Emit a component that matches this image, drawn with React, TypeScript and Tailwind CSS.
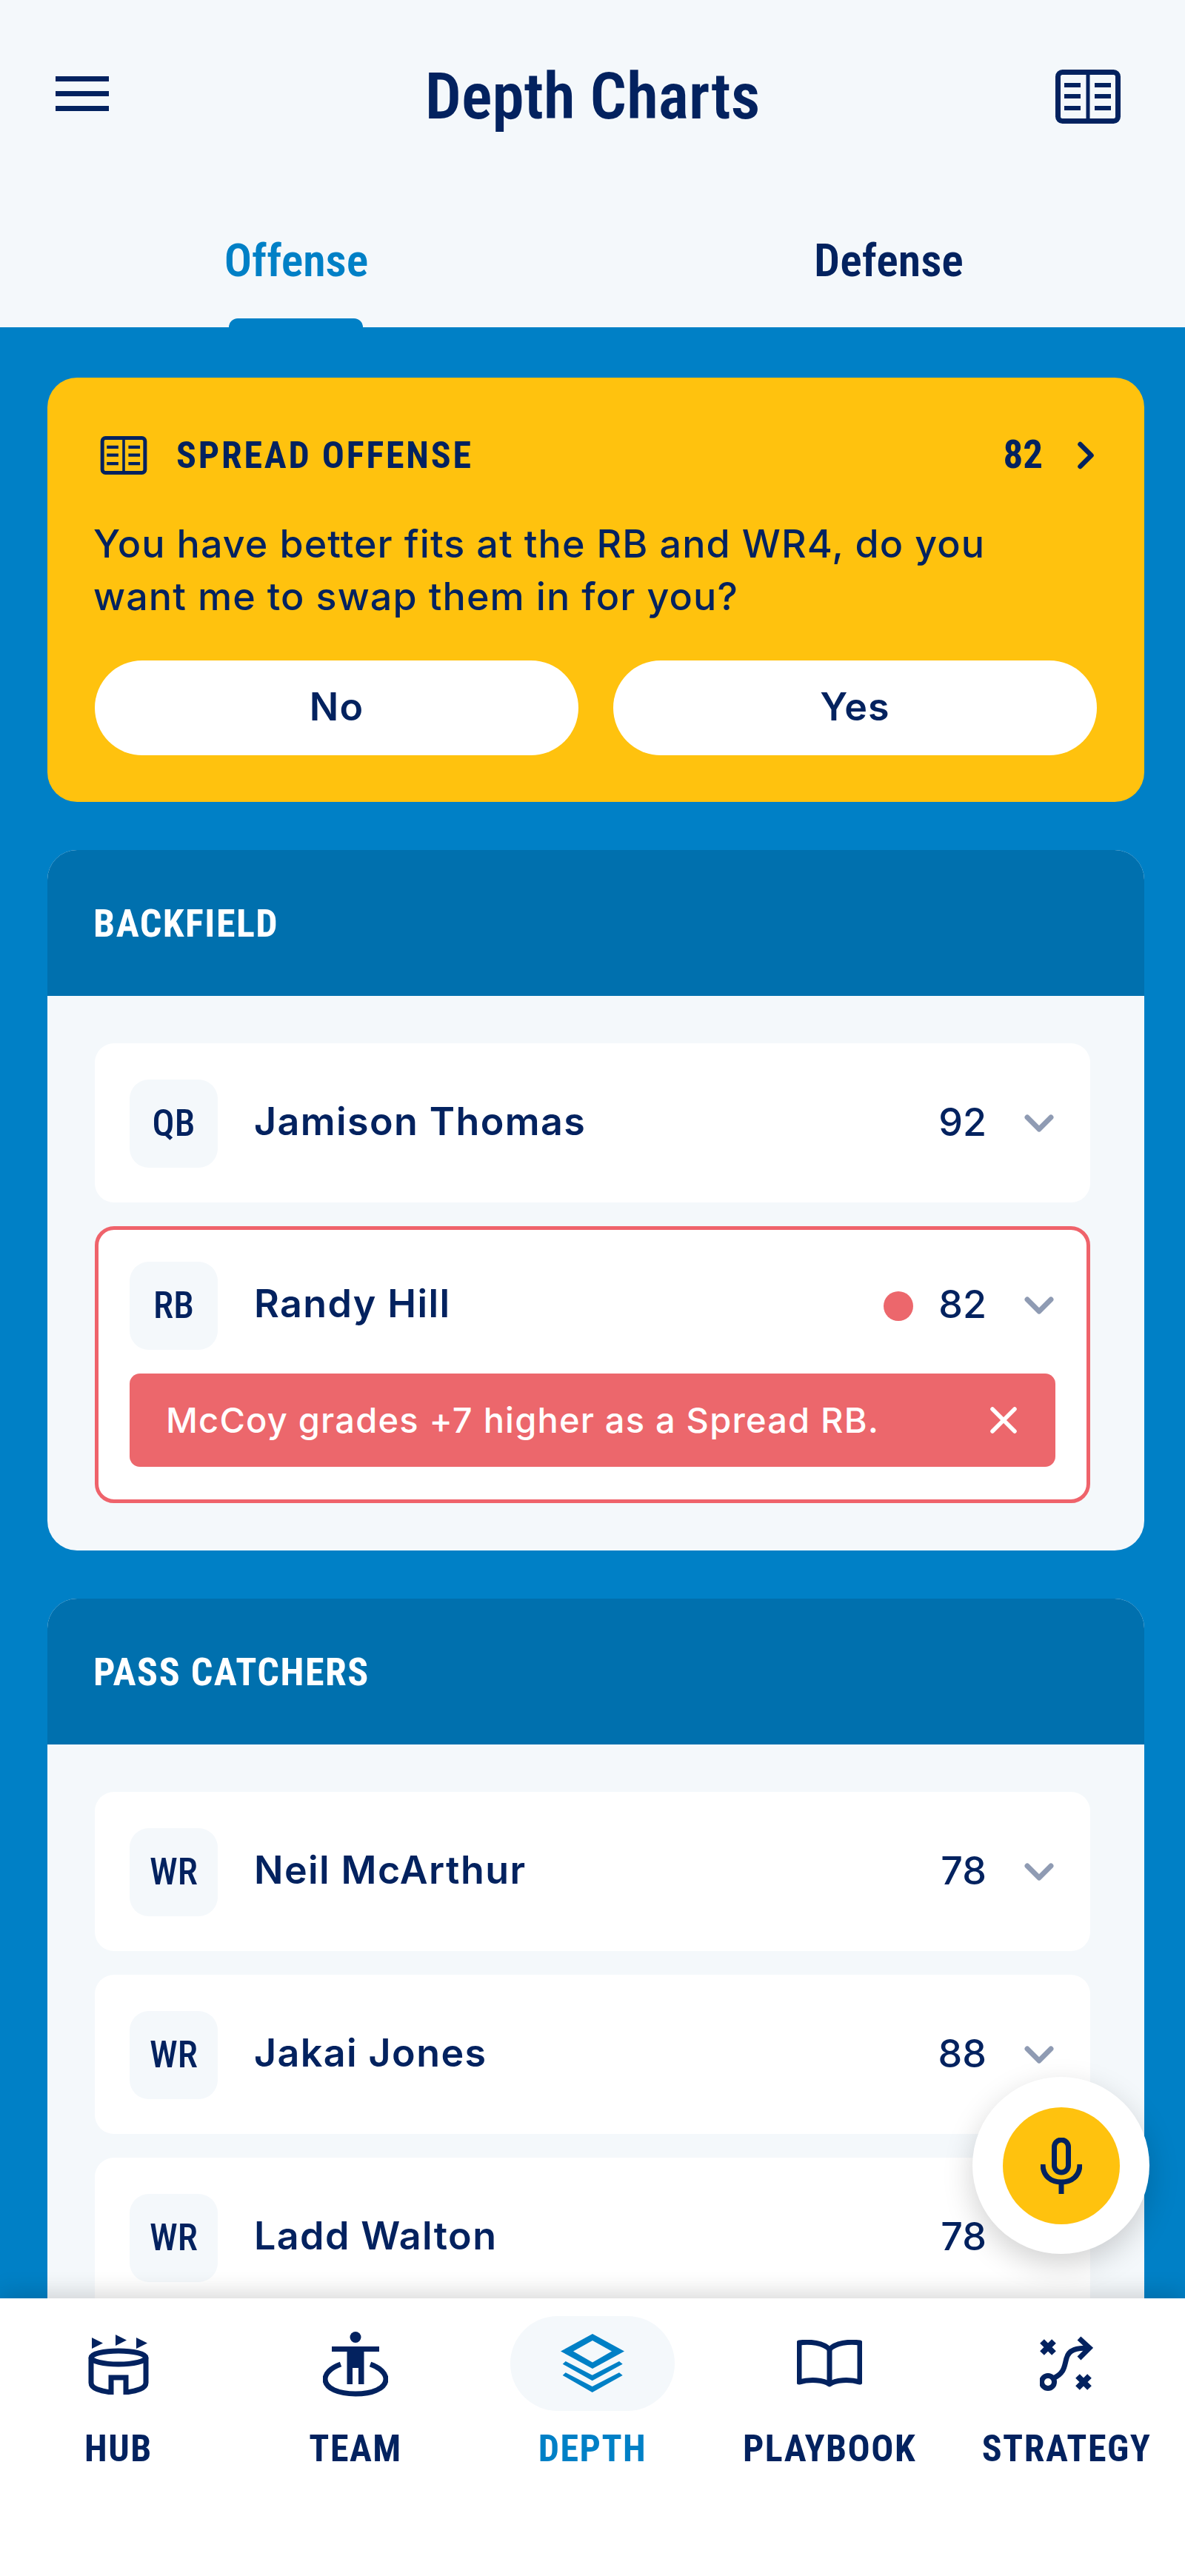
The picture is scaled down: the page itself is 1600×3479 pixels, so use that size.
import { ChevronDown, ChevronRight, X } from "lucide-react";

const condensed = "font-['Roboto',sans-serif] [font-stretch:75%]";
const body = "font-['Inter','Noto_Sans',sans-serif]";

const BookIcon = ({ className }: { className: string }) => (
    <svg viewBox="0 0 88 73" fill="none" stroke="currentColor" strokeWidth="7" className={className}>
        <rect x="3.5" y="3.5" width="81" height="66" rx="6" />
        <path d="M44 4V69" strokeWidth="5" />
        <path d="M12 21H34M12 36H34M12 52H34M53 21H75M53 36H75M53 52H75" strokeWidth="6" />
    </svg>
);

const HubIcon = () => (
    <svg viewBox="0 0 84 84" className="w-[84px] h-[84px]" fill="none" stroke="currentColor" strokeWidth="7">
        <path d="M6 7L21 14.5L6 22Z M38 3L53 10.5L38 18Z M66 7L81 14.5L66 22Z" fill="currentColor" stroke="none" />
        <ellipse cx="42" cy="34" rx="37" ry="9" />
        <path d="M5 34V68C5 76 18 79 32 81V61H52V81C66 79 79 76 79 68V34" />
    </svg>
);

const TeamIcon = () => (
    <svg viewBox="0 0 88 92" className="w-[88px] h-[92px]" fill="none">
        <ellipse cx="44" cy="10.5" rx="7.5" ry="7.5" fill="currentColor" />
        <path d="M12 23H76V30H55.5V74H48V52H40V74H32.5V30H12Z" fill="currentColor" />
        <path d="M24 47C10 52 3 60 3 67C3 80 22 87 44 87C66 87 85 80 85 67C85 60 78 52 64 47" stroke="currentColor" strokeWidth="7" />
    </svg>
);

const LayersIcon = () => (
    <svg viewBox="0 0 86 80" className="w-[86px] h-[80px]" fill="currentColor">
        <path fillRule="evenodd" d="M43 0L86 23.5L43 47L0 23.5ZM43 9L17 23.5L43 38.5L69 23.5Z" />
        <path d="M6.7 37L42.7 55.7L79 37L83.7 40.7L42.7 63.3L2.7 40.7Z" />
        <path d="M6.7 52.3L42.7 71L79 52.3L83.7 56L42.7 79L2.7 56Z" />
    </svg>
);

const PlaybookIcon = () => (
    <svg viewBox="0 0 88 64" className="w-[88px] h-[64px]" fill="none" stroke="currentColor" strokeWidth="7">
        <path d="M44 13C36 4 18 2 3 4V57C18 53 36 54 44 60C52 54 70 53 85 57V4C70 2 52 4 44 13Z" strokeLinejoin="round" />
        <path d="M44 13V58" />
    </svg>
);

const StrategyIcon = () => (
    <svg viewBox="0 0 72 74" className="w-[72px] h-[74px]" fill="none" stroke="currentColor" strokeWidth="7">
        <path d="M3 7L19 23M19 7L3 23" strokeWidth="8" />
        <circle cx="11" cy="62" r="8.5" />
        <path d="M18 57C34 50 33 40 36 30C39 18 50 16 66 16" />
        <path d="M53 3L67 16L53 30" />
        <path d="M51 54L67 70M67 54L51 70" strokeWidth="8" />
    </svg>
);

const MicIcon = () => (
    <svg viewBox="0 0 56 76" className="w-[56px] h-[76px]" fill="none" stroke="currentColor" strokeWidth="7">
        <rect x="18.5" y="3" width="19" height="44" rx="9.5" />
        <path d="M3 36C3 52 14 60 28 60C42 60 53 52 53 36" />
        <path d="M28 60V76" />
    </svg>
);

type Player = { pos: string; name: string; score: number; alert?: string };

const PlayerRow = ({ pos, name, score, alert }: Player) => (
    <div className={`bg-white rounded-[26px] box-border ${alert ? "border-[5px] border-[#ef636b] h-[374px] px-[42px] pt-[43px]" : "h-[215px] px-[47px] pt-[49px]"}`}>
        <div className="flex items-center h-[119px]">
            <div className={`w-[119px] h-[119px] rounded-[26px] bg-[#f4f8fb] flex items-center justify-center text-[50px] font-medium ${condensed}`}>{pos}</div>
            <div className="ml-[49px] flex-1 text-[52px] font-semibold leading-none tracking-[1.4px] -mt-[5px]">{name}</div>
            {alert && <div className="w-[40px] h-[40px] rounded-full bg-[#ec676c] mr-[34px]"></div>}
            <div className="text-[52px] font-medium leading-none -mt-[4px]">{score}</div>
            <ChevronDown className="w-[64px] h-[64px] text-[#8f9bb3] ml-[39px] -mr-[10px] -mt-[2px]" strokeWidth={2.6} />
        </div>
        {alert && (
            <div className="mt-[32px] h-[126px] rounded-[14px] bg-[#ec676c] flex items-center justify-between pl-[49px] pr-[40px] text-white text-[47px] tracking-[1.2px] font-medium">
                <span>{alert}</span>
                <X className="w-[60px] h-[60px]" strokeWidth={2.2} />
            </div>
        )}
    </div>
);

const Section = ({ title, players }: { title: string; players: Player[] }) => (
    <section className="shrink-0 rounded-[40px] overflow-hidden bg-[#f4f8fb]">
        <div className={`h-[197px] bg-[#0070ae] text-white flex items-center pl-[62px] pt-[3px] text-[52px] font-bold tracking-[1.5px] ${condensed}`}>{title}</div>
        <div className="pl-[64px] pr-[73px] py-[64px] flex flex-col gap-[32px]">
            {players.map((p) => <PlayerRow key={p.name} {...p} />)}
        </div>
    </section>
);

const tabs = [
    { label: "HUB", Icon: HubIcon },
    { label: "TEAM", Icon: TeamIcon },
    { label: "DEPTH", Icon: LayersIcon, active: true },
    { label: "PLAYBOOK", Icon: PlaybookIcon },
    { label: "STRATEGY", Icon: StrategyIcon },
];

const App = () => {
    return (
        <div className={`relative w-[1600px] h-[3479px] overflow-hidden flex flex-col bg-[#0080c6] text-[#03225f] ${body}`}>
            <header className="h-[442px] shrink-0 bg-[#f4f8fb]">
                <div className="h-[260px] grid grid-cols-[1fr_auto_1fr] items-center px-[87px]">
                    <div className="flex flex-col gap-[13px] w-[72px] -ml-[12px] -mt-[8px]">
                        <div className="h-[7px] bg-[#03225f]"></div>
                        <div className="h-[7px] bg-[#03225f]"></div>
                        <div className="h-[7px] bg-[#03225f]"></div>
                    </div>
                    <h1 className={`text-[87px] font-semibold leading-none ${condensed}`}>Depth Charts</h1>
                    <BookIcon className="w-[88px] h-[73px] justify-self-end" />
                </div>
                <div className={`flex h-[182px] text-[62px] font-semibold ${condensed}`}>
                    <div className="relative flex-1 text-center text-[#0080c6] leading-[184px]">
                        Offense
                        <div className="absolute left-[309px] top-[170px] w-[181px] h-[12px] bg-[#0080c6] rounded-t-[12px]"></div>
                    </div>
                    <div className="flex-1 text-center leading-[184px]">Defense</div>
                </div>
            </header>

            <main className="flex-1 min-h-0 overflow-hidden pl-[64px] pr-[55px] pt-[68px] flex flex-col gap-[65px]">
                <section className="shrink-0 bg-[#ffc20e] rounded-[40px] h-[573px] pl-[62px] pr-[64px] pt-[80px]">
                    <div className="flex items-center h-[50px]">
                        <BookIcon className="w-[66px] h-[52px] ml-[8px]" />
                        <span className={`ml-[38px] flex-1 text-[50px] font-bold tracking-[2.8px] ${condensed}`}>SPREAD OFFENSE</span>
                        <span className={`text-[53px] font-bold -ml-[4px] mr-[4px] ${condensed}`}>82</span>
                        <ChevronRight className="w-[60px] h-[60px] ml-[24px] -mr-[15px]" strokeWidth={2.6} />
                    </div>
                    <p className="mt-[59px] text-[52px] leading-[71px] tracking-[1.1px] font-medium">You have better fits at the RB and WR4, do you<br />want me to swap them in for you?</p>
                    <div className="mt-[51px] flex gap-[47px] pl-[2px]">
                        <button className="flex-1 h-[128px] pb-[3px] rounded-full bg-white text-[52px] tracking-[1.1px] font-semibold">No</button>
                        <button className="flex-1 h-[128px] pb-[3px] rounded-full bg-white text-[52px] tracking-[1.1px] font-semibold">Yes</button>
                    </div>
                </section>

                <Section title="BACKFIELD" players={[
                    { pos: "QB", name: "Jamison Thomas", score: 92 },
                    { pos: "RB", name: "Randy Hill", score: 82, alert: "McCoy grades +7 higher as a Spread RB." },
                ]} />
                <Section title="PASS CATCHERS" players={[
                    { pos: "WR", name: "Neil McArthur", score: 78 },
                    { pos: "WR", name: "Jakai Jones", score: 88 },
                    { pos: "WR", name: "Ladd Walton", score: 78 },
                ]} />
            </main>

            <nav className="relative h-[375px] shrink-0 bg-white shadow-[0_-6px_30px_rgba(0,0,0,0.16)] grid grid-cols-5">
                {tabs.map(({ label, Icon, active }) => (
                    <div key={label} className={`relative flex flex-col items-center ${active ? "text-[#0080c6]" : "text-[#03225f]"}`}>
                        {active && <div className="absolute top-[24px] w-[222px] h-[128px] rounded-[64px] bg-[#f4f8fb]"></div>}
                        <div className="relative h-[128px] mt-[24px] flex items-center justify-center"><Icon /></div>
                        <span className={`mt-[26px] text-[50px] font-bold tracking-[1.5px] leading-none ${condensed}`}>{label}</span>
                    </div>
                ))}
            </nav>

            <div className="absolute left-[1313px] top-[2805px] w-[239px] h-[239px] rounded-full bg-white shadow-[0_14px_40px_rgba(0,0,0,0.18)] flex items-center justify-center">
                <div className="w-[158px] h-[158px] rounded-full bg-[#ffc20e] flex items-center justify-center"><MicIcon /></div>
            </div>
        </div>
    );
};

export default App;
